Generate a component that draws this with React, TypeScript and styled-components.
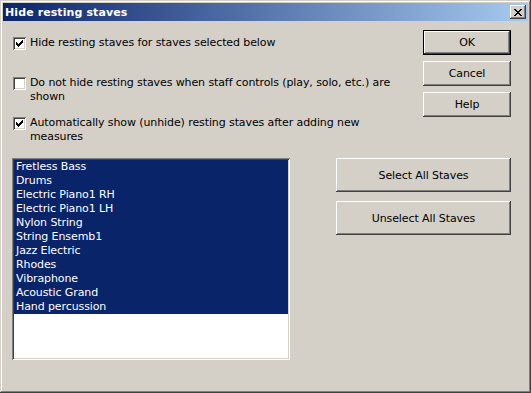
import styled, { createGlobalStyle } from "styled-components";

const GlobalStyle = createGlobalStyle`
  html, body {
    margin: 0;
    padding: 0;
    background: #d4d0c8;
  }
  body {
    font-family: "DejaVu Sans", "Liberation Sans", sans-serif;
    font-size: 11px;
    letter-spacing: -0.1px;
    color: #000;
  }
`;

const Window = styled.div`
  width: 531px;
  height: 393px;
  box-sizing: border-box;
  padding: 3px;
  background: #d4d0c8;
  display: flex;
  flex-direction: column;
  box-shadow: inset -1px -1px 0 #404040, inset 1px 1px 0 #d4d0c8,
    inset -2px -2px 0 #808080, inset 2px 2px 0 #ffffff;
`;

const TitleBar = styled.div`
  height: 18px;
  display: flex;
  align-items: center;
  justify-content: space-between;
  padding: 0 2px 0 2px;
  background: linear-gradient(to right, #0a246a, #a6caf0);
`;

const Title = styled.span`
  color: #fff;
  font-weight: bold;
  font-size: 11px;
  letter-spacing: 0.1px;
`;

const CloseButton = styled.div`
  width: 16px;
  height: 14px;
  box-sizing: border-box;
  background: #d4d0c8;
  display: flex;
  align-items: center;
  justify-content: center;
  box-shadow: inset -1px -1px 0 #404040, inset 1px 1px 0 #ffffff,
    inset -2px -2px 0 #808080;
`;

const Body = styled.div`
  flex: 1;
  display: flex;
  flex-direction: column;
  padding: 0 17px 0 9px;
`;

const TopSection = styled.div`
  display: flex;
  justify-content: space-between;
`;

const Options = styled.div`
  margin-top: 15px;
  margin-left: 1px;
  display: flex;
  flex-direction: column;
`;

const Option = styled.div`
  height: 40px;
  display: flex;
  align-items: flex-start;
`;

const Box = styled.div`
  width: 13px;
  height: 13px;
  margin-top: 1px;
  flex: none;
  box-sizing: border-box;
  background: #fff;
  box-shadow: inset 1px 1px 0 #808080, inset -1px -1px 0 #ffffff,
    inset 2px 2px 0 #404040, inset -2px -2px 0 #d4d0c8;
`;

const Label = styled.span`
  margin-left: 4px;
  line-height: 14px;
`;

const SideButtons = styled.div`
  margin-top: 9px;
  width: 88px;
  display: flex;
  flex-direction: column;
  gap: 6px;
`;

const Button = styled.div<{ $default?: boolean; $h?: number }>`
  height: ${(p) => p.$h ?? 25}px;
  box-sizing: border-box;
  display: flex;
  align-items: center;
  justify-content: center;
  background: #d4d0c8;
  box-shadow: ${(p) =>
    p.$default
      ? "inset 0 0 0 1px #000, inset -2px -2px 0 #404040, inset 2px 2px 0 #ffffff, inset -3px -3px 0 #808080"
      : "inset -1px -1px 0 #404040, inset 1px 1px 0 #ffffff, inset -2px -2px 0 #808080"};
`;

const LowerSection = styled.div`
  margin-top: 2px;
  display: flex;
  justify-content: space-between;
`;

const ListBox = styled.div`
  width: 278px;
  height: 202px;
  box-sizing: border-box;
  padding: 2px;
  background: #fff;
  box-shadow: inset 1px 1px 0 #808080, inset -1px -1px 0 #ffffff,
    inset 2px 2px 0 #404040, inset -2px -2px 0 #d4d0c8;
`;

const ListItem = styled.div<{ $selected?: boolean }>`
  height: 14px;
  line-height: 14px;
  padding-left: 2px;
  background: ${(p) => (p.$selected ? "#0a246a" : "transparent")};
  color: ${(p) => (p.$selected ? "#fff" : "#000")};
  white-space: nowrap;
`;

const StaffButtons = styled.div`
  width: 175px;
  display: flex;
  flex-direction: column;
  gap: 9px;
`;

const Check = () => {
  const tops = [2, 3, 4, 3, 2, 1, 0];
  return (
    <svg width="13" height="13" viewBox="0 0 13 13" shapeRendering="crispEdges">
      {tops.map((t, i) => (
        <rect key={i} x={3 + i} y={3 + t} width="1" height="3" fill="#000" />
      ))}
    </svg>
  );
};

const CloseX = () => (
  <svg width="8" height="7" viewBox="0 0 8 7" shapeRendering="crispEdges">
    {[0, 1, 2, 3, 4, 5, 6].map((i) => (
      <g key={i}>
        <rect x={i} y={i} width="2" height="1" fill="#000" />
        <rect x={6 - i} y={i} width="2" height="1" fill="#000" />
      </g>
    ))}
  </svg>
);

const staves = [
  "Fretless Bass",
  "Drums",
  "Electric Piano1 RH",
  "Electric Piano1 LH",
  "Nylon String",
  "String Ensemb1",
  "Jazz Electric",
  "Rhodes",
  "Vibraphone",
  "Acoustic Grand",
  "Hand percussion",
];

export default function App() {
  return (
    <>
      <GlobalStyle />
      <Window>
        <TitleBar>
          <Title>Hide resting staves</Title>
          <CloseButton>
            <CloseX />
          </CloseButton>
        </TitleBar>
        <Body>
          <TopSection>
            <Options>
              <Option>
                <Box>
                  <Check />
                </Box>
                <Label>Hide resting staves for staves selected below</Label>
              </Option>
              <Option>
                <Box />
                <Label>
                  Do not hide resting staves when staff controls (play, solo, etc.) are
                  <br />
                  shown
                </Label>
              </Option>
              <Option>
                <Box>
                  <Check />
                </Box>
                <Label>
                  Automatically show (unhide) resting staves after adding new
                  <br />
                  measures
                </Label>
              </Option>
            </Options>
            <SideButtons>
              <Button $default>OK</Button>
              <Button>Cancel</Button>
              <Button>Help</Button>
            </SideButtons>
          </TopSection>
          <LowerSection>
            <ListBox>
              {staves.map((s) => (
                <ListItem key={s} $selected>
                  {s}
                </ListItem>
              ))}
            </ListBox>
            <StaffButtons>
              <Button $h={34}>Select All Staves</Button>
              <Button $h={34}>Unselect All Staves</Button>
            </StaffButtons>
          </LowerSection>
        </Body>
      </Window>
    </>
  );
}
